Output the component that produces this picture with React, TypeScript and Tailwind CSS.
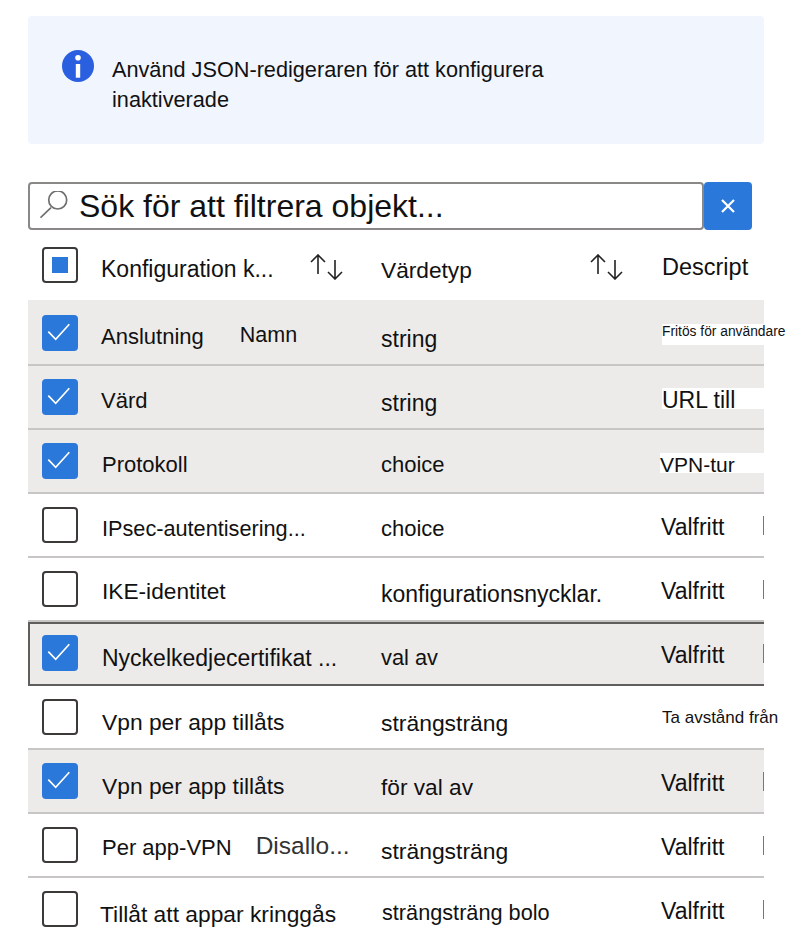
const FONT = "font-['Liberation_Sans',sans-serif]";

interface Row {
  checked: boolean;
  name: string;
  nameClass: string;
  extra?: string;
  extraClass?: string;
  type: string;
  typeClass: string;
  desc: string;
  descClass: string;
  descBg?: boolean;
  bar?: boolean;
  focused?: boolean;
}

const VALFRITT = '-ml-px mt-[21px] text-[23px] leading-[24px]';

const rows: Row[] = [
  { checked: true, name: 'Anslutning', nameClass: 'mt-[23px] text-[22px]', extra: 'Namn', extraClass: 'mt-[21px] ml-[36px] text-[21.5px]', type: 'string', typeClass: 'mt-[25px] text-[23px]', desc: 'Fritös för användare', descClass: 'w-[102px] mt-[22px] h-[21px] text-[13.8px] leading-[16px]', descBg: true },
  { checked: true, name: 'Värd', nameClass: 'mt-[23px] text-[22px]', type: 'string', typeClass: 'mt-[25px] text-[23px]', desc: 'URL till', descClass: 'w-[102px] mt-[22px] h-[21px] text-[23px] leading-[24px]', descBg: true },
  { checked: true, name: 'Protokoll', nameClass: 'ml-[1px] mt-[23px] text-[22px]', type: 'choice', typeClass: 'mt-[23px] text-[22px]', desc: 'VPN-tur', descClass: 'w-[104px] mt-[23px] h-[20px] -ml-[2px] text-[21px] leading-[24px]', descBg: true },
  { checked: false, name: 'IPsec-autentisering...', nameClass: 'ml-[1px] mt-[23px] text-[21.7px]', type: 'choice', typeClass: 'mt-[23px] text-[22px]', desc: 'Valfritt', descClass: VALFRITT, bar: true },
  { checked: false, name: 'IKE-identitet', nameClass: 'ml-[1px] mt-[21px] text-[22.7px]', type: 'konfigurationsnycklar.', typeClass: 'mt-[24px] text-[23px]', desc: 'Valfritt', descClass: VALFRITT, bar: true },
  { checked: true, name: 'Nyckelkedjecertifikat ...', nameClass: 'ml-[1px] mt-[22px] text-[23px]', type: 'val av', typeClass: 'mt-[22px] text-[21.8px]', desc: 'Valfritt', descClass: '-ml-px mt-[19px] text-[23px] leading-[24px]', bar: true, focused: true },
  { checked: false, name: 'Vpn per app tillåts', nameClass: 'ml-[1px] mt-[24px] text-[22.8px]', type: 'strängsträng', typeClass: 'mt-[25px] text-[22.9px]', desc: 'Ta avstånd från', descClass: 'mt-[23px] text-[17px] leading-[18px]' },
  { checked: true, name: 'Vpn per app tillåts', nameClass: 'ml-[1px] mt-[24px] text-[22.8px]', type: 'för val av', typeClass: 'mt-[25px] text-[22.7px]', desc: 'Valfritt', descClass: VALFRITT, bar: true },
  { checked: false, name: 'Per app-VPN', nameClass: 'ml-[1px] mt-[22px] text-[22px]', extra: 'Disallo...', extraClass: 'mt-[20px] ml-[24px] text-[24.5px] text-[#333]', type: 'strängsträng', typeClass: 'mt-[25px] text-[22.9px]', desc: 'Valfritt', descClass: VALFRITT, bar: true },
  { checked: false, name: 'Tillåt att appar kringgås', nameClass: '-ml-[1px] mt-[24px] text-[22.8px]', type: 'strängsträng bolo', typeClass: 'mt-[23px] ml-[1px] text-[21.7px]', desc: 'Valfritt', descClass: VALFRITT, bar: true },
];

function CheckBox({ checked }: { checked: boolean }) {
  if (checked) {
    return (
      <div className="h-[36px] w-[36px] rounded-[4px] bg-[#2b78db]">
        <svg width="36" height="36" viewBox="0 0 36 36" fill="none" stroke="white" strokeWidth="1.7">
          <path d="M6.3 16.7 L13.7 24.3 L27.3 9.3" />
        </svg>
      </div>
    );
  }
  return <div className="h-[36px] w-[36px] rounded-[4px] border-2 border-[#3b3a39] bg-white" />;
}

function SortIcon() {
  return (
    <svg width="34" height="26" viewBox="0 0 34 26" fill="none" stroke="#222" strokeWidth="1.6">
      <path d="M8 20 V1 M1 8 L8 1 L15 8" />
      <path d="M25 6 V25 M18 18 L25 25 L32 18" />
    </svg>
  );
}

export default function App() {
  return (
    <div className={`${FONT} h-[939px] w-[793px] overflow-hidden bg-white pt-4 text-[#111]`}>
      <div className="ml-7 flex h-[128px] w-[736px] rounded-[4px] bg-[#f0f5fe] pl-[34px] pt-[34px]">
        <svg width="32" height="32" viewBox="0 0 32 32" className="shrink-0">
          <circle cx="16" cy="16" r="16" fill="#2a5fdf" />
          <circle cx="16" cy="7.7" r="2.8" fill="white" />
          <rect x="13.8" y="14" width="4.4" height="13.7" fill="white" />
        </svg>
        <p className="ml-[18px] mt-[5px] w-[500px] text-[21.7px] leading-[30px]">
          Använd JSON-redigeraren för att konfigurera inaktiverade
        </p>
      </div>

      <div className="ml-7 mt-[38px] flex">
        <div className="flex h-[48px] w-[676px] items-center rounded-[4px] border-2 border-[#8a8886] bg-white pl-[10px]">
          <svg width="30" height="30" viewBox="0 0 30 30" fill="none" stroke="#6f6f6f" strokeWidth="1.7" className="shrink-0">
            <circle cx="17.7" cy="9" r="9" />
            <path d="M11 16.7 L0.5 26.7" />
          </svg>
          <span className="ml-[9px] text-[32px] leading-[40px]">Sök för att filtrera objekt...</span>
        </div>
        <div className="flex h-[48px] w-[48px] items-center justify-center rounded-[4px] bg-[#2b78db]">
          <svg width="14" height="14" viewBox="0 0 14 14" stroke="white" strokeWidth="2.2">
            <path d="M1 1 L13 13 M13 1 L1 13" />
          </svg>
        </div>
      </div>

      <div className="ml-7 w-[736px]">
        <div className="grid h-[70px] grid-cols-[73px_280px_281px_1fr]">
          <div className="pl-[14px] pt-[17px]">
            <div className="flex h-[36px] w-[36px] items-center justify-center rounded-[4px] border-2 border-[#3b3a39]">
              <div className="h-[16px] w-[16px] bg-[#2b78db]" />
            </div>
          </div>
          <div className="flex items-start">
            <span className="mt-[27px] w-[209px] whitespace-nowrap text-[23px] leading-[24px]">Konfiguration k...</span>
            <div className="mt-[24px]"><SortIcon /></div>
          </div>
          <div className="flex items-start">
            <span className="mt-[28px] w-[209px] text-[22.7px] leading-[24px]">Värdetyp</span>
            <div className="mt-[24px]"><SortIcon /></div>
          </div>
          <span className="mt-[25px] text-[23.5px] leading-[24px]">Descript</span>
        </div>

        {rows.map((row, i) => (
          <div
            key={i}
            className={`grid ${i === 0 ? 'h-[66px] pt-[2px]' : 'h-[64px]'} ${row.focused ? 'grid-cols-[71px_280px_281px_102px] border-2 border-r-0 border-[#605e5c]' : 'grid-cols-[73px_280px_281px_102px] border-b-2 border-[#c8c6c4]'} ${row.checked ? 'bg-[#edebe9]' : 'bg-white'}`}
          >
            <div className={row.focused ? 'pl-[12px] pt-[11px]' : 'pl-[14px] pt-[13px]'}>
              <CheckBox checked={row.checked} />
            </div>
            <div className="flex items-start whitespace-nowrap leading-[24px]">
              <span className={row.nameClass}>{row.name}</span>
              {row.extra && <span className={row.extraClass}>{row.extra}</span>}
            </div>
            <div className={`whitespace-nowrap leading-[24px] ${row.typeClass}`}>{row.type}</div>
            <div className="flex items-start justify-between">
              <div className={`whitespace-nowrap ${row.descBg ? 'bg-white' : ''} ${row.descClass}`}>{row.desc}</div>
              {row.bar && <div className={`${row.focused ? 'mt-[20px]' : 'mt-[22px]'} h-[19px] w-px bg-[#777]`} />}
            </div>
          </div>
        ))}
      </div>
    </div>
  );
}
